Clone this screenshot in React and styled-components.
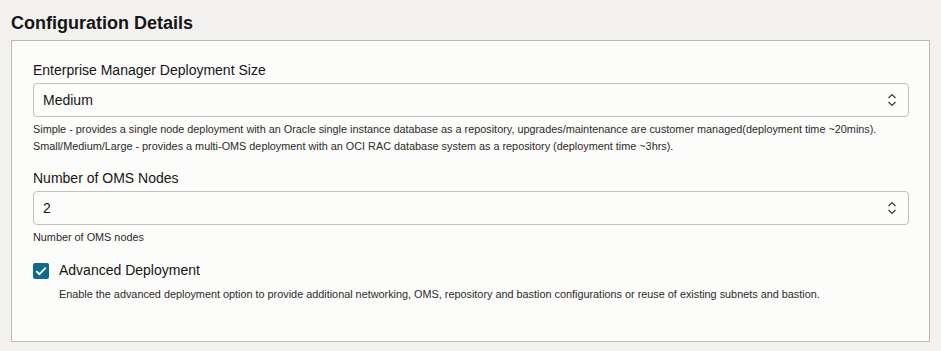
import * as React from "react";
import styled, { createGlobalStyle } from "styled-components";

const GlobalStyle = createGlobalStyle`
  html, body {
    margin: 0;
    padding: 0;
    background: #f2f1f0;
  }
  body {
    font-family: "Liberation Sans", Arial, sans-serif;
    color: #161513;
  }
`;

const Page = styled.div`
  padding: 12px 11px 10px;
`;

const Heading = styled.h2`
  margin: 0 0 6px;
  font-size: 18px;
  line-height: 22px;
  font-weight: 700;
  color: #161513;
`;

const Panel = styled.section`
  border: 1px solid #bcb9b5;
  background: #fcfcfb;
  padding: 21px 20px 38px 21px;
`;

const Field = styled.div`
  display: flex;
  flex-direction: column;
  margin-bottom: ${({ $gap }) => $gap || 0}px;
`;

const Label = styled.label`
  font-size: 14px;
  line-height: 17px;
  color: #161513;
  margin-bottom: 4px;
`;

const SelectBox = styled.div`
  display: flex;
  align-items: center;
  justify-content: space-between;
  height: 34px;
  box-sizing: border-box;
  border: 1px solid #c3c0bc;
  border-radius: 4px;
  background: #fcfcfb;
  padding: 0 11px 0 9px;
  font-size: 14px;
  color: #161513;
`;

const Help = styled.div`
  margin-top: ${({ $top }) => $top ?? 4}px;
  font-size: 10.85px;
  line-height: 17px;
  color: #2b2a28;
  padding-left: ${({ $indent }) => $indent || 0}px;
`;

const CheckRow = styled.div`
  display: flex;
  align-items: center;
  gap: 10px;
`;

const Box = styled.span`
  width: 16px;
  height: 16px;
  border-radius: 2px;
  background: #116a8a;
  display: flex;
  align-items: center;
  justify-content: center;
  flex-shrink: 0;
`;

const CheckLabel = styled.span`
  font-size: 14px;
  line-height: 17px;
  color: #161513;
`;

const Chevrons = () => (
  <svg width="10" height="14" viewBox="0 0 10 14" fill="none" stroke="#3a3937" strokeWidth="1.2">
    <path d="M1.5 5 L5 1.5 L8.5 5" />
    <path d="M1.5 9 L5 12.5 L8.5 9" />
  </svg>
);

const Select = ({ value }) => (
  <SelectBox role="combobox">
    <span>{value}</span>
    <Chevrons />
  </SelectBox>
);

const Checkbox = ({ label }) => (
  <CheckRow>
    <Box>
      <svg width="12" height="10" viewBox="0 0 12 10" fill="none" stroke="#fff" strokeWidth="1.8">
        <path d="M1.2 5.2 L4.4 8.2 L10.8 1.6" />
      </svg>
    </Box>
    <CheckLabel>{label}</CheckLabel>
  </CheckRow>
);

export default function App() {
  return (
    <>
      <GlobalStyle />
      <Page>
        <Heading>Configuration Details</Heading>
        <Panel>
          <Field $gap={15}>
            <Label>Enterprise Manager Deployment Size</Label>
            <Select value="Medium" />
            <Help>
              Simple - provides a single node deployment with an Oracle single instance database as a repository, upgrades/maintenance are customer managed(deployment time ~20mins).
              <br />
              Small/Medium/Large - provides a multi-OMS deployment with an OCI RAC database system as a repository (deployment time ~3hrs).
            </Help>
          </Field>
          <Field $gap={16}>
            <Label>Number of OMS Nodes</Label>
            <Select value="2" />
            <Help>Number of OMS nodes</Help>
          </Field>
          <Field>
            <Checkbox label="Advanced Deployment" />
            <Help $indent={26} $top={7}>
              Enable the advanced deployment option to provide additional networking, OMS, repository and bastion configurations or reuse of existing subnets and bastion.
            </Help>
          </Field>
        </Panel>
      </Page>
    </>
  );
}
